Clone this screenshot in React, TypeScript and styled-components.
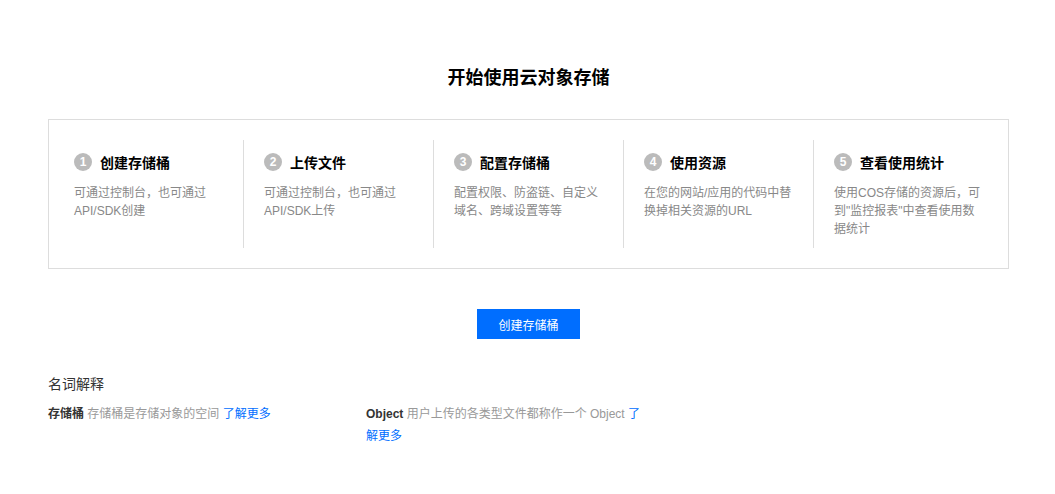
import { ReactElement } from 'react';
import styled, { createGlobalStyle } from 'styled-components';

const GlobalStyle = createGlobalStyle`
  body {
    margin: 0;
    background: #fff;
    font-family: "Liberation Sans", Arial, "Noto Sans CJK SC", sans-serif;
    color: #333;
  }
`;

const Page = styled.div`
  padding: 66px 46px 40px 48px;
`;

const Title = styled.h1`
  margin: 0;
  font-size: 18px;
  line-height: 24px;
  font-weight: 700;
  color: #000;
  text-align: center;
`;

const StepBox = styled.div`
  display: flex;
  margin-top: 29px;
  padding: 20px 5px 20px 4px;
  border: 1px solid #ddd;
`;

const Step = styled.div<{ $first?: boolean }>`
  box-sizing: border-box;
  width: 190px;
  height: 108px;
  padding: 12px 19px 0 20px;
  border-left: 1px solid ${(p) => (p.$first ? 'transparent' : '#ddd')};
`;

const StepHead = styled.div`
  display: flex;
  align-items: center;
  gap: 8px;
  height: 20px;
`;

const StepNum = styled.span`
  display: inline-flex;
  align-items: center;
  justify-content: center;
  width: 18px;
  height: 18px;
  border-radius: 50%;
  background: #bbb;
  color: #fff;
  font-size: 12px;
  font-weight: 700;
`;

const StepName = styled.span`
  font-size: 14px;
  font-weight: 700;
  color: #000;
`;

const StepDesc = styled.p`
  margin: 12px 0 0;
  font-size: 12px;
  line-height: 18px;
  color: #888;
`;

const Actions = styled.div`
  display: flex;
  justify-content: center;
  margin-top: 40px;
`;

const PrimaryButton = styled.button`
  width: 103px;
  height: 30px;
  border: none;
  background: #006eff;
  color: #fff;
  font-family: inherit;
  font-size: 12px;
  cursor: pointer;
`;

const SectionTitle = styled.h3`
  margin: 35px 0 0;
  font-size: 14px;
  line-height: 20px;
  font-weight: 400;
  color: #333;
`;

const TermGrid = styled.div`
  display: grid;
  grid-template-columns: 318px 318px 1fr;
  margin-top: 9px;
`;

const Term = styled.div`
  padding-right: 40px;
  font-size: 12px;
  line-height: 22px;
  color: #999;
`;

const TermLabel = styled.b`
  color: #333;
`;

const MoreLink = styled.a`
  color: #006eff;
  text-decoration: none;
  cursor: pointer;
`;

const steps = [
  { name: '创建存储桶', desc: '可通过控制台，也可通过API/SDK创建' },
  { name: '上传文件', desc: '可通过控制台，也可通过API/SDK上传' },
  { name: '配置存储桶', desc: '配置权限、防盗链、自定义域名、跨域设置等等' },
  { name: '使用资源', desc: '在您的网站/应用的代码中替换掉相关资源的URL' },
  { name: '查看使用统计', desc: '使用COS存储的资源后，可到"监控报表"中查看使用数据统计' },
];

const terms = [
  { label: '存储桶', desc: '存储桶是存储对象的空间' },
  { label: 'Object', desc: '用户上传的各类型文件都称作一个 Object' },
];

export default function App(): ReactElement {
  return (
    <>
      <GlobalStyle />
      <Page>
        <Title>开始使用云对象存储</Title>
        <StepBox>
          {steps.map((step, idx) => (
            <Step key={idx} $first={idx === 0}>
              <StepHead>
                <StepNum>{idx + 1}</StepNum>
                <StepName>{step.name}</StepName>
              </StepHead>
              <StepDesc>{step.desc}</StepDesc>
            </Step>
          ))}
        </StepBox>
        <Actions>
          <PrimaryButton>创建存储桶</PrimaryButton>
        </Actions>
        <SectionTitle>名词解释</SectionTitle>
        <TermGrid>
          {terms.map((term) => (
            <Term key={term.label}>
              <TermLabel>{term.label}</TermLabel> {term.desc} <MoreLink>了解更多</MoreLink>
            </Term>
          ))}
        </TermGrid>
      </Page>
    </>
  );
}
